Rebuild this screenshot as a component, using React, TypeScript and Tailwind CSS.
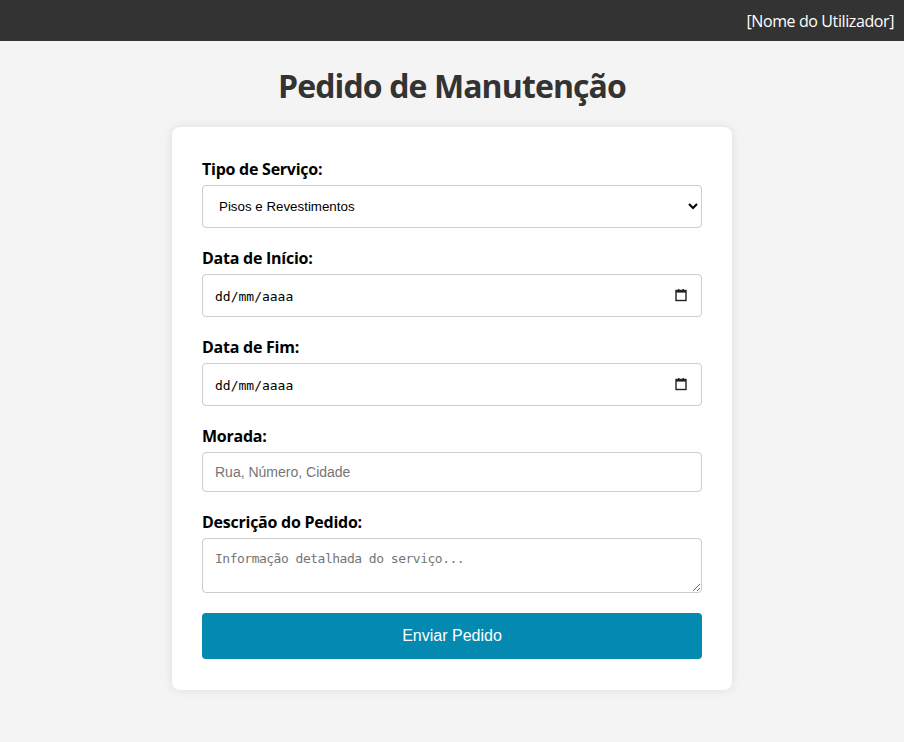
import { useState } from "react"

function CalendarIcon() {
  return (
    <svg width="14" height="14" viewBox="0 0 14 14" className="text-[#222]">
      <rect x="2" y="2.5" width="10" height="10" fill="none" stroke="currentColor" strokeWidth="1.4" />
      <rect x="2" y="2" width="10" height="2.6" fill="currentColor" />
      <rect x="4" y="1" width="1.4" height="2" fill="currentColor" />
      <rect x="8.6" y="1" width="1.4" height="2" fill="currentColor" />
    </svg>
  )
}

function DateField({ id }: { id: string }) {
  return (
    <div className="relative">
      <input
        id={id}
        type="text"
        placeholder="dd/mm/aaaa"
        className="block w-full h-[43px] px-3 pt-[1px] border border-[#ccc] rounded bg-white text-[13px] text-black placeholder:text-black font-['DejaVu_Sans_Mono',monospace] outline-none"
      />
      <span className="absolute right-[14px] top-[14px] pointer-events-none">
        <CalendarIcon />
      </span>
    </div>
  )
}

export default function App() {
  const [service, setService] = useState("pisos")

  const labelCls = "block mb-[5px] text-base leading-[21px] font-bold text-black tracking-[-0.25px]"

  return (
    <div className="min-h-[742px] bg-[#f4f4f4] font-['Open_Sans',sans-serif]">
      {/* Top bar */}
      <header className="bg-[#333] text-white flex justify-end items-center h-[41px] px-[10px]">
        <span className="text-base tracking-[-0.4px]">[Nome do Utilizador]</span>
      </header>

      <h1 className="text-center text-[32px] leading-[40px] font-bold text-[#333] mt-[25px] mb-[21px] tracking-[-0.9px]">
        Pedido de Manutenção
      </h1>

      {/* Form card */}
      <form
        className="mx-auto w-[560px] bg-white rounded-lg shadow-[0_0_10px_rgba(0,0,0,0.1)] px-[30px] pt-[32px] pb-[31px]"
        onSubmit={(e) => e.preventDefault()}
      >
        <div className="mb-5">
          <label htmlFor="tipo" className={labelCls}>Tipo de Serviço:</label>
          <select
            id="tipo"
            value={service}
            onChange={(e) => setService(e.target.value)}
            className="block w-full h-[43px] px-3 mt-[1px] border border-[#ccc] rounded bg-white text-[13.33px] text-black font-['Liberation_Sans',Arial,sans-serif] outline-none"
          >
            <option value="pisos">Pisos e Revestimentos</option>
            <option value="eletricidade">Eletricidade</option>
            <option value="canalizacao">Canalização</option>
            <option value="pintura">Pintura</option>
          </select>
        </div>

        <div className="mb-5">
          <label htmlFor="inicio" className={labelCls}>Data de Início:</label>
          <DateField id="inicio" />
        </div>

        <div className="mb-5">
          <label htmlFor="fim" className={labelCls}>Data de Fim:</label>
          <DateField id="fim" />
        </div>

        <div className="mb-5">
          <label htmlFor="morada" className={labelCls}>Morada:</label>
          <input
            id="morada"
            type="text"
            placeholder="Rua, Número, Cidade"
            className="block w-full h-[40px] px-3 border border-[#ccc] rounded bg-white text-sm text-black placeholder:text-[#757575] font-['Liberation_Sans',Arial,sans-serif] outline-none"
          />
        </div>

        <div className="mb-5">
          <label htmlFor="descricao" className={labelCls}>Descrição do Pedido:</label>
          <textarea
            id="descricao"
            placeholder="Informação detalhada do serviço..."
            className="block w-full h-[55px] px-3 pt-[12px] pb-[8px] border border-[#ccc] rounded bg-white text-[13px] leading-[16px] text-black placeholder:text-[#757575] font-['DejaVu_Sans_Mono',monospace] tracking-[-0.5px] outline-none resize-y"
          />
        </div>

        <button
          type="submit"
          className="block w-full h-[46px] rounded bg-[#0489b1] text-white text-base font-['Liberation_Sans',Arial,sans-serif] hover:bg-[#037a9e]"
        >
          Enviar Pedido
        </button>
      </form>
    </div>
  )
}
